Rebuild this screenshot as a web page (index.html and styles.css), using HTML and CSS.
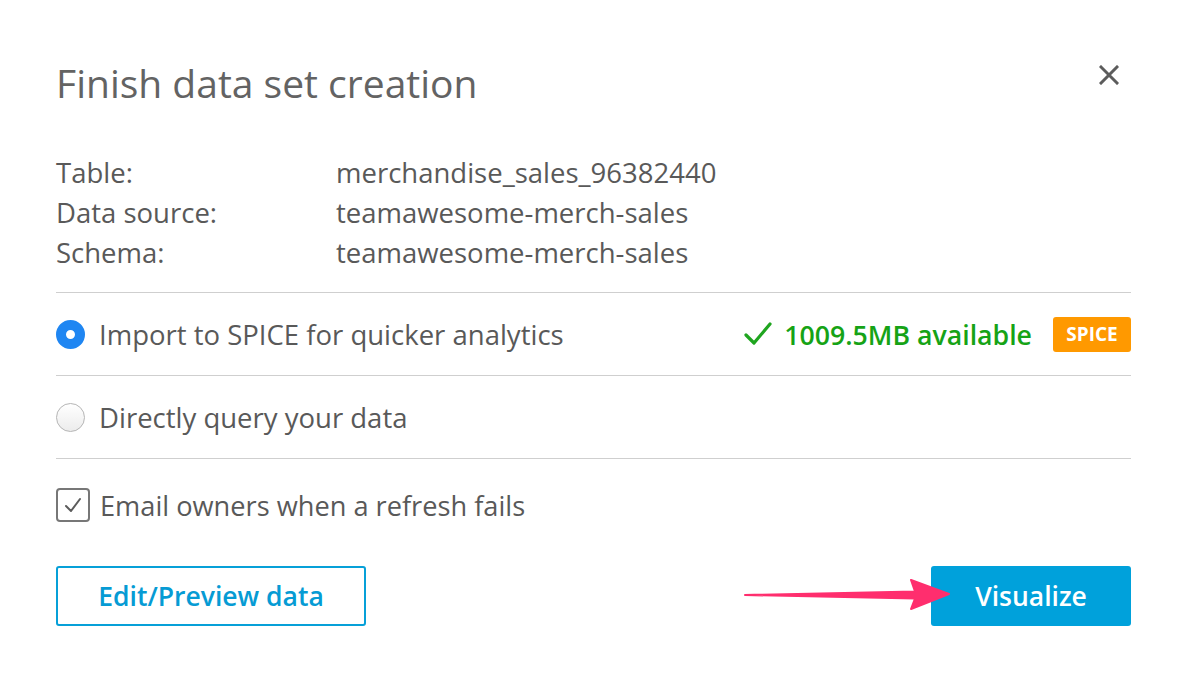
FILE: index.html
```html
<!DOCTYPE html>
<html>
<head>
<meta charset="utf-8">
<link rel="stylesheet" href="styles.css">
</head>
<body>
<div class="dialog">
  <div class="header">
    <h1 class="title">Finish data set creation</h1>
    <button class="close" aria-label="Close">
      <svg width="20" height="20" viewBox="0 0 20 20"><path d="M2 2 L18 18 M18 2 L2 18" stroke="#5c5c5c" stroke-width="3" stroke-linecap="square"/></svg>
    </button>
  </div>
  <div class="info">
    <div class="info-row"><span class="label">Table:</span><span class="value">merchandise_sales_96382440</span></div>
    <div class="info-row"><span class="label">Data source:</span><span class="value">teamawesome-merch-sales</span></div>
    <div class="info-row"><span class="label">Schema:</span><span class="value">teamawesome-merch-sales</span></div>
  </div>
  <div class="options">
    <div class="option first">
      <span class="radio checked"></span>
      <span class="option-text">Import to SPICE for quicker analytics</span>
      <span class="avail">
        <svg width="28" height="26" viewBox="0 0 28 26"><path d="M2 14 L10 22 L26 3" fill="none" stroke="#1fa51f" stroke-width="3.2" stroke-linecap="round" stroke-linejoin="round"/></svg>
        <span class="avail-text">1009.5MB available</span>
      </span>
      <span class="badge">SPICE</span>
    </div>
    <div class="option">
      <span class="radio"></span>
      <span class="option-text">Directly query your data</span>
    </div>
  </div>
  <div class="check-row">
    <span class="checkbox">
      <svg width="18" height="16" viewBox="0 0 18 16"><path d="M2 9 L7 14 L16 2" fill="none" stroke="#5c5c5c" stroke-width="2" stroke-linecap="round" stroke-linejoin="round"/></svg>
    </span>
    <span class="option-text">Email owners when a refresh fails</span>
  </div>
  <div class="actions">
    <button class="btn btn-outline">Edit/Preview data</button>
    <button class="btn btn-primary">Visualize</button>
  </div>
  <svg class="arrow" width="220" height="40" viewBox="0 0 220 40">
    <path d="M2 20 L172 16.5 L168 5 L206 19 L168 34 L172 23.5 Z" fill="#ff2e6e" stroke="#ff2e6e" stroke-width="2" stroke-linejoin="round"/>
  </svg>
</div>
</body>
</html>
```
FILE: styles.css
```css
html, body {
  margin: 0;
  padding: 0;
  background: #ffffff;
}
body {
  font-family: "Open Sans", "Noto Sans", "Liberation Sans", sans-serif;
  color: #595959;
}
.dialog {
  position: relative;
  width: 1190px;
  height: 674px;
  box-sizing: border-box;
  padding: 56px 59px 0 56px;
}
.header {
  display: flex;
  justify-content: space-between;
  align-items: flex-start;
  height: 48px;
}
.title {
  margin: 3px 0 0;
  font-size: 39px;
  line-height: 48px;
  font-weight: 500;
  color: #636363;
}
.close {
  border: 0;
  background: none;
  padding: 0;
  margin: 9px 12px 0 0;
  width: 20px;
  height: 20px;
  cursor: pointer;
}
.info {
  margin-top: 48px;
}
.info-row {
  display: flex;
  height: 40px;
  align-items: center;
  font-size: 27.5px;
  font-weight: 500;
}
.label {
  width: 280px;
}
.options {
  margin-top: 20px;
  border-top: 1px solid #cfcfcf;
}
.option {
  display: flex;
  align-items: center;
  height: 82px;
  border-bottom: 1px solid #cfcfcf;
  font-size: 27.5px;
  font-weight: 500;
}
.radio {
  width: 29px;
  height: 29px;
  box-sizing: border-box;
  border-radius: 50%;
  border: 1px solid #b5b5b5;
  background: linear-gradient(#ffffff, #ececec);
  margin-right: 14px;
  flex: none;
}
.radio.checked {
  border: 10px solid #1f86f2;
  background: #ffffff;
}
.option-text {
  flex: 1;
}
.avail {
  display: flex;
  align-items: center;
  color: #16a316;
  font-weight: 600;
  font-size: 26.7px;
}
.avail svg {
  margin-right: 12px;
}
.badge {
  margin-left: 21px;
  background: #ff9900;
  color: #ffffff;
  font-weight: 700;
  font-size: 19px;
  width: 78px;
  height: 35px;
  line-height: 35px;
  text-align: center;
  border-radius: 3px;
}
.check-row {
  display: flex;
  align-items: center;
  margin-top: 29px;
  height: 34px;
  font-size: 27.2px;
  font-weight: 500;
}
.checkbox {
  width: 34px;
  height: 34px;
  box-sizing: border-box;
  border: 2px solid #777777;
  border-radius: 4px;
  display: flex;
  align-items: center;
  justify-content: center;
  margin-right: 10px;
}
.actions {
  margin-top: 44px;
  display: flex;
  justify-content: space-between;
}
.btn {
  font-family: inherit;
  font-size: 26.5px;
  font-weight: 600;
  height: 60px;
  border-radius: 3px;
  cursor: pointer;
}
.btn-outline {
  width: 310px;
  background: #ffffff;
  border: 2px solid #06a0d8;
  color: #069bd4;
}
.btn-primary {
  width: 200px;
  background: #00a1db;
  border: 0;
  color: #ffffff;
}
.arrow {
  position: absolute;
  left: 743px;
  top: 575px;
}
```
